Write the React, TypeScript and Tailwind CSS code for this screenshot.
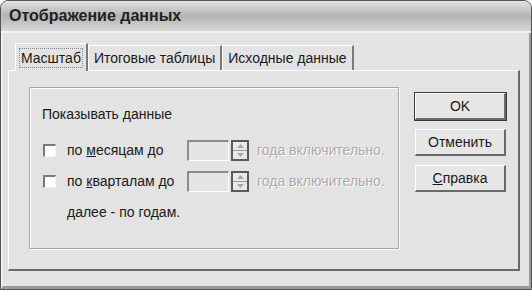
import React from 'react'

const font = { fontFamily: '"Liberation Sans", Arial, sans-serif' }

function Check() {
  return (
    <div className="w-[13px] h-[13px] bg-white border-t-[2px] border-l-[2px] border-t-[#7a7a7a] border-l-[#7a7a7a] border-b border-r border-b-[#f4f4f4] border-r-[#f4f4f4] shrink-0" />
  )
}

function Spin() {
  return (
    <div className="flex items-center">
      <div className="w-[42px] h-[21px] border-t-[2px] border-l-[2px] border-t-[#8a8a8a] border-l-[#8a8a8a] border-b border-r border-b-white border-r-white bg-[#e4e4e4]" />
      <div className="ml-[2px] w-[18px] h-[21px] border-[2px] border-[#5a5a5a] flex flex-col bg-[#e8e8e8]">
        <div className="flex-1 flex items-center justify-center border-b border-[#9a9a9a]">
          <svg width="7" height="4" viewBox="0 0 7 4"><path d="M0 4 L3.5 0 L7 4Z" fill="#a8a8a8" /></svg>
        </div>
        <div className="flex-1 flex items-center justify-center">
          <svg width="7" height="4" viewBox="0 0 7 4"><path d="M0 0 L3.5 4 L7 0Z" fill="#a8a8a8" /></svg>
        </div>
      </div>
    </div>
  )
}

function Row({ pre, u, post }: { pre: string; u: string; post: string }) {
  return (
    <div className="flex items-center h-[21px]">
      <div className="ml-[1px]"><Check /></div>
      <div className="ml-[11px] w-[120px] text-[14px] text-[#1a1a1a]">
        {pre}<span className="underline">{u}</span>{post}
      </div>
      <Spin />
      <div className="ml-[8px] text-[14px] text-[#ababab] [text-shadow:1px_1px_0_#ffffff]">года включительно.</div>
    </div>
  )
}

function Btn({ children, def }: { children: React.ReactNode; def?: boolean }) {
  return (
    <div className={def ? 'border border-[#3a3a3a]' : 'border border-transparent'}>
      <div className="h-[27px] flex items-center justify-center text-[14px] text-[#1a1a1a] border-t border-l border-t-white border-l-white border-b-[2px] border-r-[2px] border-b-[#6a6a6a] border-r-[#6a6a6a] bg-[#e6e6e6]">
        {children}
      </div>
    </div>
  )
}

export default function App() {
  const tabs = ['Итоговые таблицы', 'Исходные данные']
  return (
    <div style={font} className="w-[532px] h-[290px] bg-[#d6d6d6] border border-[#555555] rounded-t-[8px] overflow-hidden flex flex-col">
      <div className="h-[32px] shrink-0 flex items-center px-[8px] bg-gradient-to-b from-[#e2e2e2] via-[#b4b4b4] to-[#d8d8d8] border-b-[2px] border-[#f2f2f2]">
        <span className="text-[16px] font-bold text-[#222222]">Отображение данных</span>
      </div>
      <div className="flex-1 bg-[#e3e3e3] px-[5px] pt-[9px] border-l-[2px] border-r-[2px] border-b-[3px] border-l-[#efefef] border-r-[#9a9a9a] border-b-[#9a9a9a] flex flex-col">
        <div className="flex items-end h-[28px] pl-[7px]">
          <div className="h-[28px] px-[3px] flex items-center text-[14px] text-[#1a1a1a] border-t border-l border-t-white border-l-white border-r-[2px] border-r-[#7a7a7a] bg-[#e3e3e3] relative z-10 -mb-[1px]">
            <span className="px-[1px] border border-dotted border-[#888888] leading-[18px]">Масштаб</span>
          </div>
          {tabs.map(t => (
            <div key={t} className="h-[25px] px-[5px] flex items-center text-[14px] text-[#1a1a1a] border-t border-l border-t-white border-l-white border-r-[2px] border-r-[#7a7a7a]">
              {t}
            </div>
          ))}
        </div>
        <div className="h-[201px] w-[512px] border-t border-l border-t-white border-l-white border-b-[2px] border-r-[2px] border-b-[#6a6a6a] border-r-[#6a6a6a] flex pl-[20px] pt-[16px]">
          <div className="w-[370px] h-[162px] border border-[#a6a6a6] shadow-[inset_1px_1px_0_#ffffff,1px_1px_0_#ffffff] pl-[12px] pt-[17px]">
            <div className="text-[14px] text-[#1a1a1a] leading-[18px]">Показывать данные</div>
            <div className="mt-[17px]"><Row pre="по " u="м" post="есяцам до" /></div>
            <div className="mt-[10px]"><Row pre="по " u="к" post="варталам до" /></div>
            <div className="mt-[10px] ml-[25px] text-[14px] text-[#1a1a1a]">далее - по годам.</div>
          </div>
          <div className="ml-[15px] mt-[5px] w-[93px] flex flex-col gap-[7px]">
            <Btn def>OK</Btn>
            <Btn>Отменить</Btn>
            <Btn><span><span className="underline">С</span>правка</span></Btn>
          </div>
        </div>
      </div>
    </div>
  )
}
